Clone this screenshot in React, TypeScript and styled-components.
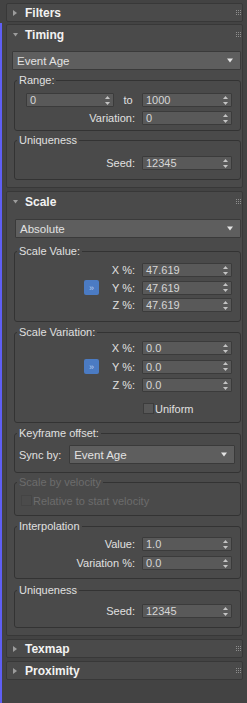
import styled, { createGlobalStyle } from "styled-components";

const GlobalStyle = createGlobalStyle`
  html, body {
    margin: 0;
    padding: 0;
    background: #434343;
  }
  body {
    font-family: "Liberation Sans", Arial, sans-serif;
    font-size: 11px;
    color: #dedede;
  }
`;

const Page = styled.div`
  width: 247px;
  height: 703px;
  box-sizing: border-box;
  padding-top: 3px;
  display: flex;
  flex-direction: column;
  overflow: hidden;
  background: #434343;
`;

const Stack = styled.div`
  flex: 1;
  margin-top: 1px;
  padding: 1px 4px 0 4px;
  border-left: 2px solid #5f5ff5;
  display: flex;
  flex-direction: column;
  gap: 3px;
`;

const Roll = styled.section<{ $mt?: number; $outer?: boolean }>`
  margin: ${(p) => (p.$outer ? "0 4px 0 6px" : "0")};
  margin-top: ${(p) => p.$mt ?? 0}px;
  background: #4a4a4a;
  border: 1px solid #383838;
  border-radius: 2px;
`;

const Head = styled.div<{ $open?: boolean }>`
  height: ${(p) => (p.$open ? 19 : 17)}px;
  display: flex;
  align-items: center;
  padding: 0 1px 0 6px;
  font-size: 12px;
  font-weight: bold;
  color: #f2f2f2;
`;

const ArrowBox = styled.span`
  width: 12px;
  display: flex;
  align-items: center;
`;

const Title = styled.span`
  flex: 1;
`;

const Body = styled.div`
  padding: 7px 1px 7px 7px;
  display: flex;
  flex-direction: column;
`;

const DropLine = styled.div<{ $ml?: number; $mt?: number }>`
  display: flex;
  margin-left: ${(p) => p.$ml ?? 0}px;
  margin-top: ${(p) => p.$mt ?? 0}px;
`;

const Drop = styled.div`
  height: 19px;
  box-sizing: border-box;
  flex: 1;
  background: #5e5e5e;
  border: 1px solid #3a3a3a;
  border-radius: 1px;
  display: flex;
  align-items: center;
  justify-content: space-between;
  padding: 0 7px 0 4px;
  color: #e2e2e2;
  font-size: 11.5px;
`;

const Group = styled.fieldset<{ $mt?: number }>`
  margin: ${(p) => p.$mt ?? 4}px 0 0 0;
  padding: 0;
  min-inline-size: 0;
  border: 1px solid #333333;
  border-radius: 3px;
`;

const Legend = styled.legend<{ $off?: boolean }>`
  margin-left: 2px;
  padding: 0 2px;
  line-height: 12px;
  font-size: 11px;
  color: ${(p) => (p.$off ? "#6c6c6c" : "#e0e0e0")};
`;

const Inner = styled.div<{ $pt: number; $pb: number }>`
  padding-top: ${(p) => p.$pt}px;
  padding-bottom: ${(p) => p.$pb}px;
`;

const Rows = styled.div<{ $gap?: number }>`
  display: grid;
  grid-template-columns: 1fr 15px 43px 90px;
  row-gap: ${(p) => p.$gap ?? 4}px;
  padding-right: 8px;
  align-items: center;
`;

const Label = styled.span<{ $narrow?: boolean }>`
  grid-column: ${(p) => (p.$narrow ? "3" : "1 / 4")};
  text-align: right;
  padding-right: 7px;
  line-height: 14px;
  white-space: nowrap;
  color: #e0e0e0;
`;

const Lead = styled.div`
  grid-column: 1 / 4;
  display: flex;
  justify-content: flex-end;
  align-items: center;
`;

const To = styled.span`
  width: 28px;
  text-align: center;
  color: #e0e0e0;
`;

const Spin = styled.div<{ $w?: number }>`
  width: ${(p) => p.$w ?? 90}px;
  height: 14px;
  box-sizing: border-box;
  background: #595959;
  border: 1px solid #3b3b3b;
  border-radius: 1px;
  display: flex;
  align-items: center;
  justify-content: space-between;
  padding: 0 3px 0 3px;
  color: #d6d6d6;
  font-size: 11px;
`;

const LockBtn = styled.div`
  grid-column: 2;
  width: 15px;
  height: 15px;
  border-radius: 2px;
  background: #4b7bc3;
  color: #b7cdef;
  font-size: 9px;
  display: flex;
  align-items: center;
  justify-content: center;
`;

const Check = styled.label<{ $off?: boolean; $col?: boolean }>`
  grid-column: ${(p) => (p.$col ? "4" : "auto")};
  margin-top: ${(p) => (p.$col ? 6 : 0)}px;
  height: 13px;
  display: flex;
  align-items: center;
  gap: 1px;
  padding-left: ${(p) => (p.$col ? 1 : 6)}px;
  color: ${(p) => (p.$off ? "#6c6c6c" : "#e0e0e0")};
`;

const Box = styled.span<{ $off?: boolean }>`
  width: 11px;
  height: 11px;
  box-sizing: border-box;
  background: ${(p) => (p.$off ? "#4b4b4b" : "#575757")};
  border: 1px solid ${(p) => (p.$off ? "#444444" : "#3c3c3c")};
`;

const SyncRow = styled.div`
  display: flex;
  align-items: center;
  gap: 8px;
  padding: 0 5px 0 4px;
  color: #e0e0e0;
`;

function Tri({ open }: { open?: boolean }) {
  return open ? (
    <svg width="5" height="4" viewBox="0 0 5 4">
      <polygon points="0,0 5,0 2.5,3.5" fill="#9c9c9c" />
    </svg>
  ) : (
    <svg width="4" height="6" viewBox="0 0 4 6">
      <polygon points="0,0 4,3 0,6" fill="#9c9c9c" />
    </svg>
  );
}

function Grip() {
  const dots = [];
  for (let r = 0; r < 3; r++)
    for (let c = 0; c < 3; c++)
      dots.push(<rect key={`${r}-${c}`} x={c * 2} y={r * 2} width="1" height="1" fill="#8e8e8e" />);
  return (
    <svg width="5" height="5" viewBox="0 0 5 5">
      {dots}
    </svg>
  );
}

function SpinArrows() {
  return (
    <svg width="5" height="9" viewBox="0 0 5 9">
      <polygon points="2.5,0 5,3 0,3" fill="#c4c4c4" />
      <polygon points="0,6 5,6 2.5,9" fill="#c4c4c4" />
    </svg>
  );
}

function DropArrow() {
  return (
    <svg width="6" height="5" viewBox="0 0 6 5">
      <polygon points="0,0.5 6,0.5 3,4.5" fill="#e4e4e4" />
    </svg>
  );
}

function Field({ value, w }: { value: string; w?: number }) {
  return (
    <Spin $w={w}>
      <span>{value}</span>
      <SpinArrows />
    </Spin>
  );
}

function Rollout(props: { title: string; open?: boolean; mt?: number; outer?: boolean; children?: React.ReactNode }) {
  return (
    <Roll $mt={props.mt} $outer={props.outer}>
      <Head $open={props.open}>
        <ArrowBox>
          <Tri open={props.open} />
        </ArrowBox>
        <Title>{props.title}</Title>
        <Grip />
      </Head>
      {props.open && props.children}
    </Roll>
  );
}

function Dropdown({ value }: { value: string }) {
  return (
    <Drop>
      <span>{value}</span>
      <DropArrow />
    </Drop>
  );
}

function Xyz({ values }: { values: string[] }) {
  return (
    <>
      <Label $narrow>X %:</Label>
      <Field value={values[0]} />
      <LockBtn>»</LockBtn>
      <Label $narrow>Y %:</Label>
      <Field value={values[1]} />
      <Label $narrow>Z %:</Label>
      <Field value={values[2]} />
    </>
  );
}

export default function App() {
  return (
    <Page>
      <GlobalStyle />
      <Rollout title="Filters" outer />
      <Stack>
        <Rollout title="Timing" open>
          <Body>
            <DropLine $ml={-2}>
              <Dropdown value="Event Age" />
            </DropLine>
            <Group $mt={4}>
              <Legend>Range:</Legend>
              <Inner $pt={7} $pb={5}>
                <Rows $gap={4}>
                  <Lead>
                    <Field value="0" w={88} />
                    <To>to</To>
                  </Lead>
                  <Field value="1000" />
                  <Label>Variation:</Label>
                  <Field value="0" />
                </Rows>
              </Inner>
            </Group>
            <Group $mt={3}>
              <Legend>Uniqueness</Legend>
              <Inner $pt={10} $pb={9}>
                <Rows>
                  <Label>Seed:</Label>
                  <Field value="12345" />
                </Rows>
              </Inner>
            </Group>
          </Body>
        </Rollout>

        <Rollout title="Scale" open>
          <Body>
            <DropLine $ml={1} $mt={1}>
              <Dropdown value="Absolute" />
            </DropLine>
            <Group $mt={7}>
              <Legend>Scale Value:</Legend>
              <Inner $pt={6} $pb={9}>
                <Rows $gap={3}>
                  <Xyz values={["47.619", "47.619", "47.619"]} />
                </Rows>
              </Inner>
            </Group>
            <Group $mt={4}>
              <Legend>Scale Variation:</Legend>
              <Inner $pt={3} $pb={7}>
                <Rows $gap={4}>
                  <Xyz values={["0.0", "0.0", "0.0"]} />
                  <Check $col>
                    <Box />
                    Uniform
                  </Check>
                </Rows>
              </Inner>
            </Group>
            <Group $mt={4}>
              <Legend>Keyframe offset:</Legend>
              <Inner $pt={6} $pb={8}>
                <SyncRow>
                  <span>Sync by:</span>
                  <Dropdown value="Event Age" />
                </SyncRow>
              </Inner>
            </Group>
            <Group $mt={3}>
              <Legend $off>Scale by velocity</Legend>
              <Inner $pt={6} $pb={8}>
                <Check $off>
                  <Box $off />
                  Relative to start velocity
                </Check>
              </Inner>
            </Group>
            <Group $mt={4}>
              <Legend>Interpolation</Legend>
              <Inner $pt={5} $pb={8}>
                <Rows $gap={5}>
                  <Label>Value:</Label>
                  <Field value="1.0" />
                  <Label>Variation %:</Label>
                  <Field value="0.0" />
                </Rows>
              </Inner>
            </Group>
            <Group $mt={5}>
              <Legend>Uniqueness</Legend>
              <Inner $pt={8} $pb={9}>
                <Rows>
                  <Label>Seed:</Label>
                  <Field value="12345" />
                </Rows>
              </Inner>
            </Group>
          </Body>
        </Rollout>

        <Rollout title="Texmap" />
        <Rollout title="Proximity" />
      </Stack>
    </Page>
  );
}
